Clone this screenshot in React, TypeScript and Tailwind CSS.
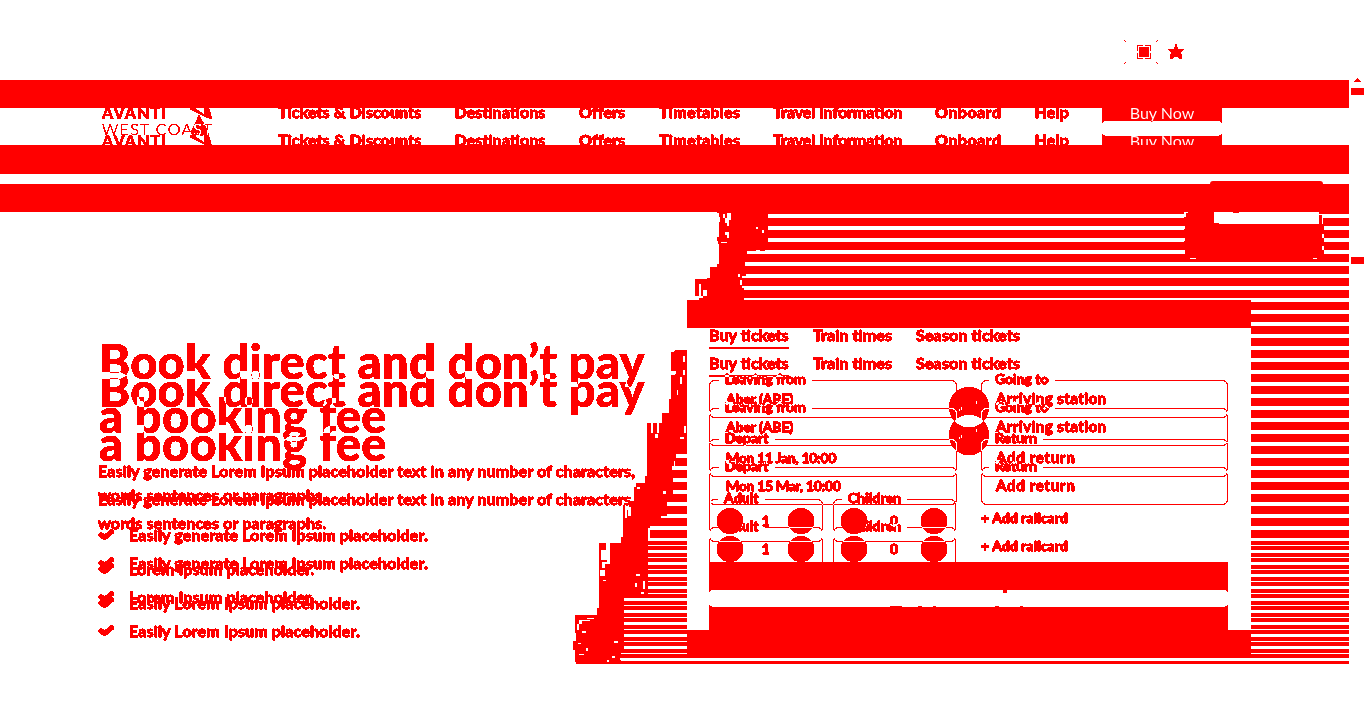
const links = [
  { label: "Tickets & Discounts", cls: "w-[176.5px] tracking-[0.12px]" },
  { label: "Destinations", cls: "w-[124.5px] tracking-[0.08px]" },
  { label: "Offers", cls: "w-[80px] tracking-[0.1px]" },
  { label: "Timetables", cls: "w-[114px] tracking-[0.3px]" },
  { label: "Travel Information", cls: "w-[162px] tracking-[-0.05px]" },
  { label: "Onboard", cls: "w-[99.5px] tracking-[0.5px]" },
  { label: "Help", cls: "w-[68.5px] tracking-[0.2px]" },
];

const layer = "[grid-area:1/1] mix-blend-difference [filter:url(#crisp)] text-[#0ff]";
const heavy = "font-bold [-webkit-text-stroke:0.6px_currentColor]";

function NavLayer({ shift }: { shift: string }) {
  return (
    <div className={`${layer} ${shift} flex h-11 w-[1349px] items-start pl-[102px]`}>
      <div className="flex w-[175px]">
        <div className="w-[88px] pt-[12px]">
          <div className="whitespace-nowrap text-[16px] font-black leading-[16px] tracking-[1.1px]">AVANTI</div>
          <div className="whitespace-nowrap text-[16px] font-light leading-[16px] tracking-[1.3px]">WEST COAST</div>
        </div>
        <svg className="-mt-[6px] shrink-0" width="22" height="33" viewBox="0 0 22 33" fill="#0ff">
          <path fillRule="evenodd" d="M9 0L17 14L22 32L18 31L0 22V19ZM5 19L8 18L11 21L14 20L15 28L6 22Z" />
        </svg>
      </div>
      <nav className={`flex pt-[9px] pl-px text-[16px] leading-[20px] ${heavy}`}>
        {links.map((l) => (
          <a key={l.label} className={`${l.cls} shrink-0 whitespace-nowrap`}>{l.label}</a>
        ))}
      </nav>
      <button className="-ml-px h-[43px] w-[120px] shrink-0 rounded-[5px] bg-[#0ff] pb-[3px] text-[16px] font-normal leading-[38px] text-black">Buy Now</button>
    </div>
  );
}

function Check() {
  return (
    <svg width="16" height="12" viewBox="0 0 16 12" className="mr-[15px] shrink-0">
      <path d="M3 5.8L6.5 8.6L13.7 2.7" fill="none" stroke="#f00" strokeWidth="4.6" strokeLinecap="round" strokeLinejoin="round" />
    </svg>
  );
}

function Headline({ shift }: { shift: string }) {
  return (
    <h1 className={`${layer} ${shift} h-[112px] whitespace-nowrap pl-px pt-px text-[47px] font-black leading-[54px] tracking-[0.3px]`}>
      Book direct and don’t pay<br />a booking fee
    </h1>
  );
}

function Details({ shift }: { shift: string }) {
  return (
    <div className={`[grid-area:1/1] [filter:url(#crisp)] ${shift} ${heavy} h-[192px] whitespace-nowrap text-[16px] leading-[24px] tracking-[0.15px]`}>
      <p className="mt-[126px]">
        Easily generate Lorem Ipsum placeholder text in any number of characters,<br />words sentences or paragraphs.
      </p>
      <ul className="mt-4 flex flex-col gap-[10px]">
        {["Easily generate Lorem Ipsum placeholder.", "Lorem Ipsum placeholder.", "Easily Lorem Ipsum placeholder."].map((t) => (
          <li key={t} className="flex items-center"><Check />{t}</li>
        ))}
      </ul>
    </div>
  );
}

function Field({ label, value, cls, text }: { label: string; value: string; cls: string; text: string }) {
  return (
    <fieldset className={`${cls} h-[45px] rounded-[5px] border border-[#0ff]`}>
      <legend className="whitespace-nowrap px-[6px] pb-[2px] text-[14px] leading-[12px]">{label}</legend>
      <div className={`${text} whitespace-nowrap pl-[7px] leading-[23px]`}>{value}</div>
    </fieldset>
  );
}

function Counter({ label, value, cls }: { label: string; value: string; cls: string }) {
  return (
    <fieldset className={`${cls} h-[50px] rounded-[5px] border border-[#0ff] pl-[7px] pr-[8px]`}>
      <legend className="ml-[1px] whitespace-nowrap px-[6px] pb-[2px] text-[14px] leading-[12px] tracking-[0.1px]">{label}</legend>
      <div className="mt-[2px] flex items-center justify-between text-[14px] leading-[26px]">
        <span className="size-[26px] rounded-full bg-[#0ff]" />
        <span>{value}</span>
        <span className="size-[26px] rounded-full bg-[#0ff]" />
      </div>
    </fieldset>
  );
}

function FormLayer({ shift, date }: { shift: string; date: string }) {
  return (
    <div className={`${layer} ${shift} ${heavy} h-[279px] w-[519px]`}>
      <div className="flex h-[21px] text-[16px] leading-[13px] tracking-[0.1px]">
        <span className="mr-6 w-20 whitespace-nowrap border-b-2 border-[#0ff]">Buy tickets</span>
        <span className="mr-6 w-[79px] whitespace-nowrap">Train times</span>
        <span className="whitespace-nowrap tracking-[0.15px]">Season tickets</span>
      </div>
      <div className="relative mt-6 flex gap-6">
        <Field label="Leaving from" value="Aber (ABE)" cls="w-[248px] pl-[9px]" text="text-[14px] tracking-[-0.1px]" />
        <Field label="Going to" value="Arriving station" cls="w-[247px] pl-[7px]" text="text-[15px] tracking-[0.45px]" />
        <span className="absolute left-[240px] top-[14px] size-10 rounded-full bg-[#0ff]" />
      </div>
      <div className="mt-[14px] flex gap-6">
        <Field label="Depart" value={date} cls="w-[248px] pl-[9px]" text="text-[14px] tracking-[-0.3px]" />
        <Field label="Return" value="Add return" cls="w-[247px] pl-[7px]" text="text-[15px] tracking-[0.7px]" />
      </div>
      <div className="mt-[15px] flex">
        <Counter label="Adult" value="1" cls="mr-[10px] w-[114px]" />
        <Counter label="Children" value="0" cls="mr-[25px] w-[123px]" />
        <span className="pt-[17px] text-[14px] leading-[18px] tracking-[0.05px]">+ Add railcard</span>
      </div>
      <div className="mt-5 h-[45px] rounded-[5px] bg-[#0ff]" />
    </div>
  );
}

export default function App() {
  return (
    <div className="isolate flex h-[728px] w-[1366px] overflow-hidden bg-white font-[Lato,sans-serif] text-[#f00]">
      <svg className="absolute size-0">
        <filter id="crisp" x="-10%" y="-20%" width="120%" height="140%" colorInterpolationFilters="sRGB">
          <feComponentTransfer><feFuncA type="discrete" tableValues="0 1 1 1 1 1" /></feComponentTransfer>
        </filter>
      </svg>
      <div className="w-[1349px] shrink-0">
        <div className="flex h-20 items-start pl-[1124px] pt-10">
          <svg width="62" height="24" viewBox="0 0 62 24" fill="#f00" shapeRendering="crispEdges">
            <path d="M0 0h1v1h1v1h-1v-1h-1zM33 0h1v1h-1v1h-1v-1h1zM0 23h1v-1h1v1h-1v1h-1zM32 22h1v1h1v1h-1v-1h-1z" />
            <path d="M15 7h10v10h-10zM13 5h6v1h-5v5h-1zM21 5h6v6h-1v-5h-5zM13 13h1v5h5v1h-6zM26 13h1v6h-6v-1h5z" />
            <path d="M51 4H53V7H54V9H60V10H59V11H58V12H57V14H58V19H55V18H54V17H50V18H49V19H46V14H47V12H46V11H45V10H44V9H50V7H51Z" />
          </svg>
        </div>
        <div className="h-7 bg-[#f00]" />
        <header className="h-[37px] overflow-hidden">
          <div className="-mt-[15px] grid">
            <NavLayer shift="mt-0" />
            <NavLayer shift="mt-7" />
          </div>
        </header>
        <div className="h-[29px] bg-[#f00]" />
        <div className="flex h-[10px] items-end pl-[1210px]">
          <div className="h-[3px] w-[113px] rounded-t-[4px] bg-[#f00]" />
        </div>
        <div className="h-7 bg-[#f00]" />
        <main className="relative flex h-[452px] pl-[98px]">
          <svg className="absolute left-0 top-0 -z-10" width="1349" height="452" viewBox="0 212 1349 452" fill="#f00" shapeRendering="crispEdges">
            <defs>
              <pattern id="wide" width="20" height="12" y="214" patternUnits="userSpaceOnUse"><rect y="4" width="20" height="8" /></pattern>
              <pattern id="fine" width="20" height="12" y="538" patternUnits="userSpaceOnUse"><rect y="3" width="20" height="4" /><rect y="8" width="20" height="4" /></pattern>
            </defs>
            <rect x="720" y="212" width="629" height="2" />
            <rect x="640" y="214" width="709" height="327" fill="url(#wide)" />
            <rect x="610" y="541" width="739" height="123" fill="url(#fine)" />
            <path fill="#fff" d="M560 212H725V300H687V350H675V470H650V541H624V598H600V664H560Z" />
            <path d="M717 212H768V250H765V251H760V250H756V251H747V262H745V270H746V276H742V288H744V300H699V298H703V296H707V290H703V296H701V284H699V296H695V279H707V278H710V267H717V264H719V244H718V241H717V237H719V222H720V217H719V213H717Z" />
            <path d="M671 352H674V351H683V350H687V448H682V454H676V461H674V466H672V474H673V494H671V498H667V516H661V524H650V528H648V594H624V653H621V664H576V662H575V650H573V641H576V633H575V615H597V608H599V543H606V550H601V560H607V562H610V543H621V537H623V505H625V518H627V510H629V501H634V487H636V483H645V476H647V423H651V433H653V423H657V433H659V423H662V413H669V399H671V375H676V371H671Z" />
            <path fill="#fff" d="M723 214h2v4h-2zM727 213h4v7h-2v6h-2v-3h-2v-5h2zM725 232h4v6h-2v-3h-2zM721 242h6v1h-6zM756 227h2v2h-2zM762 230h2v3h-2zM738 274h2v3h-2zM740 280h2v5h-2zM683 356h2v6h-2zM680 377h2v7h-2zM683 370h2v5h-2zM677 390h1v5h-1zM655 434h3v4h-3zM684 426h2v7h-2zM680 437h4v2h-4zM663 491h3v3h-3zM637 487h3v2h-3zM628 507h3v9h-3zM602 562h8v2h-5v4h-3zM600 570h5v6h-5zM603 580h3v1h-3zM636 574h4v2h-4zM643 581h2v8h-2zM635 583h2v4h-2zM641 592h3v2h-3zM579 620h11v1h-8v3h-3v6h-2v-6h2zM587 618h7v1h-7zM582 631h4v2h-4zM578 643h3v1h-3zM586 648h2v3h-2zM579 654h5v1h-5zM614 641h4v2h-4zM612 656h3v2h-3zM607 660h2v2h-2z" />
            <path d="M1188 212H1319V215H1322V219H1324V258H1188V254H1185V249H1184V241H1185V237H1184V229H1185V225H1184V217H1186V214H1188Z" />
            <path fill="#fff" d="M1214 212H1319V224H1219V223H1214ZM1184 212h4v1h-2v2h-2zM1190 258h6v1h-6zM1313 258h4v1h-4zM1322 216h1v8h-1zM1322 234h2v4h-2zM1322 246h2v4h-2z" />
            <path d="M1233 212h6v1h-6z" />
            <path fill="#fff" d="M620 658H1349V661H621Z" />
          </svg>
          <div className="grid h-[330px] w-[589px] shrink-0 items-start pt-[121px]">
            <Headline shift="mt-0" />
            <Headline shift="mt-7" />
            <Details shift="mt-0" />
            <Details shift="mt-7" />
          </div>
          <section className="mt-[88px] h-[358px] w-[564px] shrink-0">
            <div className="h-7 bg-[#f00]" />
            <div className="relative h-[302px] overflow-hidden bg-white px-[22px]">
              <div className="grid">
                <FormLayer shift="mt-0" date="Mon 11 Jan, 10:00" />
                <FormLayer shift="mt-7" date="Mon 15 Mar, 10:00" />
              </div>
              <svg className="absolute left-0 top-[50px]" width="564" height="230" fill="#f00" shapeRendering="crispEdges">
                <circle cx="43" cy="143" r="13" />
                <circle cx="167" cy="143" r="13" />
                <path fill="#fff" d="M289 23h1v3h-1zM274 29h1v3h-1zM272 31h1v2h-1zM289 51h1v3h-1zM274 57h1v3h-1zM272 59h1v2h-1z" />
                <path d="M22 184h519v28h-519z" />
                <path d="M316 212h4v3h-4zM203 228h12v2h-12zM231 228h4v2h-4zM246 228h3v2h-3zM308 228h4v2h-4zM333 228h3v2h-3z" />
              </svg>
            </div>
            <div className="h-7 bg-[#f00]" />
          </section>
        </main>
      </div>
      <aside className="w-[17px] pl-[2px] pt-[78px]">
        <svg width="14" height="187" fill="#f00" shapeRendering="crispEdges">
          <path d="M6 0h1v1h1v1h1v1h1v1h-7v-1h1v-1h1v-1h1zM0 10h13v7h-13zM0 179h13v7h-13z" />
        </svg>
      </aside>
    </div>
  );
}
